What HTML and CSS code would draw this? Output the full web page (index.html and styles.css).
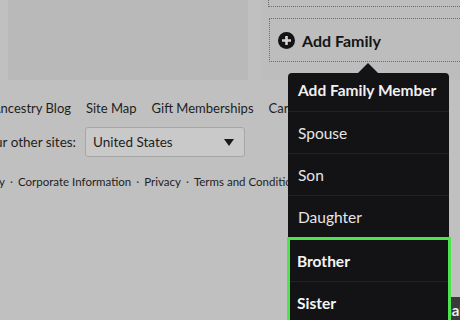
FILE: index.html
```html
<!DOCTYPE html>
<html lang="en">
<head>
  <meta charset="UTF-8" />
  <title>Add Family</title>
  <link rel="stylesheet" href="styles.css">
</head>
<body>
  <div class="page">
    <!-- Top area: tree panel and add family box -->
    <div class="top">
      <div class="panel"></div>
      <div class="side">
        <div class="dotted-box first"></div>
        <div class="dotted-box add">
          <span class="plus-icon">
            <svg width="17" height="17" viewBox="0 0 17 17">
              <circle cx="8.5" cy="8.5" r="8.5" fill="#141414"/>
              <path d="M8.5 4v9M4 8.5h9" stroke="#d4d4d4" stroke-width="2.6"/>
            </svg>
          </span>
          <span class="add-label">Add Family</span>
        </div>
      </div>
    </div>

    <!-- Footer -->
    <div class="footer">
      <div class="footer-links">
        <div class="lead links-lead"><a>Ancestry Blog</a></div>
        <a>Site Map</a>
        <a>Gift Memberships</a>
        <a>Careers</a>
      </div>
      <div class="sites-row">
        <div class="lead sites-lead"><span>Visit our other sites:</span></div>
        <div class="site-select">
          <span>United States</span>
          <span class="caret"></span>
        </div>
      </div>
      <div class="legal">
        <div class="lead legal-lead"><span>&copy; 1997-2019 Ancestry</span></div>
        <span class="dot">·</span>
        <span>Corporate Information</span><span class="dot">·</span>
        <span>Privacy</span><span class="dot">·</span>
        <span>Terms and Conditions</span>
      </div>
    </div>

    <div class="bottom-btn">Final</div>

    <!-- Add family member menu -->
    <div class="menu">
      <div class="menu-head">Add Family Member</div>
      <div class="menu-item">Spouse</div>
      <div class="menu-item">Son</div>
      <div class="menu-item">Daughter</div>
      <div class="highlight">
        <div class="menu-item strong">Brother</div>
        <div class="menu-item strong">Sister</div>
      </div>
    </div>
  </div>
</body>
</html>
```

FILE: styles.css
```css
* {
  box-sizing: border-box;
}

body {
  margin: 0;
  background: #c0c0c0;
  font-family: Lato, "Noto Sans", sans-serif;
  color: #1e1e1e;
  overflow: hidden;
}

.page {
  position: relative;
  width: 460px;
  height: 320px;
  overflow: hidden;
}

.top {
  display: flex;
  height: 80px;
}

.panel {
  margin-left: 8px;
  width: 240px;
  background: #b9b9b9;
}

.side {
  margin-left: 14px;
  flex: 1;
  padding-left: 7px;
  background: #bdbdbd;
}

.dotted-box {
  border: 1px dotted #6b6b6b;
  border-right: none;
  margin-right: -10px;
}

.dotted-box.first {
  margin-top: -20px;
  height: 27px;
  margin-left: -1px;
}

.dotted-box.add {
  margin-top: 11px;
  height: 44px;
  display: flex;
  align-items: center;
  gap: 7px;
  padding-left: 8px;
}

.plus-icon {
  display: flex;
}

.add-label {
  font-weight: 700;
  font-size: 16px;
  color: #151515;
}

/* first item of each footer row is cut by the left edge */
.lead {
  display: flex;
  justify-content: flex-end;
  flex-shrink: 0;
  white-space: nowrap;
}

.links-lead {
  width: 71px;
}

.sites-lead {
  width: 76px;
}

.legal-lead {
  width: 5px;
}

.footer {
  padding-top: 20px;
}

.footer-links {
  display: flex;
  gap: 15px;
  font-size: 13px;
  white-space: nowrap;
}

.sites-row {
  display: flex;
  align-items: center;
  gap: 9px;
  margin-top: 11px;
  font-size: 13.5px;
  white-space: nowrap;
}

.site-select {
  width: 160px;
  height: 30px;
  display: flex;
  align-items: center;
  justify-content: space-between;
  padding: 0 10px 0 7px;
  background: #c9c9c9;
  border: 1px solid #a6a6a6;
  border-radius: 3px;
}

.caret {
  border-left: 5px solid transparent;
  border-right: 5px solid transparent;
  border-top: 7px solid #1a1a1a;
}

.legal {
  display: flex;
  gap: 5px;
  margin-top: 18px;
  font-size: 11.5px;
  white-space: nowrap;
}

.dot {
  color: #444;
}

.bottom-btn {
  position: absolute;
  left: 423px;
  top: 297px;
  width: 40px;
  height: 30px;
  display: flex;
  justify-content: flex-end;
  padding-top: 4px;
  background: #3a3a3a;
  color: #eee;
  font-size: 15px;
  font-weight: 700;
}

.menu {
  position: absolute;
  left: 288px;
  top: 73px;
  width: 161px;
  background: #131315;
  border-radius: 4px 4px 0 0;
  color: #e6e6e6;
}

.menu::before {
  content: "";
  position: absolute;
  left: 70px;
  top: -10px;
  border-left: 10px solid transparent;
  border-right: 10px solid transparent;
  border-bottom: 10px solid #131315;
}

.menu-head {
  height: 39px;
  padding: 8px 10px 0;
  font-size: 15.5px;
  font-weight: 700;
  color: #f0f0f0;
  border-bottom: 1px solid #222226;
}

.menu-item {
  height: 42px;
  display: flex;
  align-items: center;
  padding-left: 10px;
  font-size: 15.5px;
  border-bottom: 1px solid #222226;
}

.highlight {
  margin: -1px -2px 0 -1px;
  border: 3px solid #4ee44e;
  border-bottom: none;
}

.highlight .menu-item {
  padding-left: 7px;
}

.menu-item.strong {
  font-weight: 700;
  color: #f4f4f4;
}
```
